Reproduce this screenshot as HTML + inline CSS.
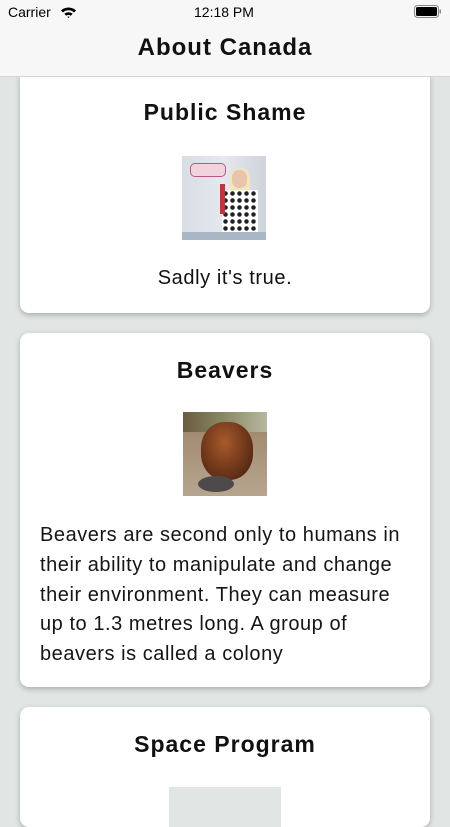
<!DOCTYPE html>
<html><head><meta charset="utf-8"><style>
*{margin:0;padding:0;box-sizing:border-box}
body{width:450px;height:800px;overflow:hidden;background:#e1e5e3;font-family:"Liberation Sans",sans-serif;color:#111;position:relative}
.nav{position:absolute;left:0;top:0;width:450px;height:77px;background:#f7f7f7;border-bottom:1px solid #d4d4d4;z-index:2}
.sb{position:absolute;top:4px;font-size:14px;color:#000}
.navt{position:absolute;top:34px;width:100%;text-align:center;font-size:24px;font-weight:bold;letter-spacing:1px}
.card{position:absolute;left:20px;width:410px;background:#fff;border-radius:9px;box-shadow:0 2px 6px rgba(0,0,0,0.25)}
.t{position:absolute;width:100%;text-align:center;font-size:23px;font-weight:bold;letter-spacing:1px}
.img{position:absolute;width:84px;height:84px;overflow:hidden}
.p{position:absolute;left:20px;font-size:20px;line-height:29.8px;white-space:nowrap;color:#151515;letter-spacing:0.55px}
</style></head><body>
<div class="nav">
<div class="sb" style="left:8px">Carrier</div>
<svg style="position:absolute;left:60px;top:6px" width="17" height="12" viewBox="0 0 17 12"><path d="M1 4.5 A11 11 0 0 1 16 4.5 L14 6.5 A8 8 0 0 0 3 6.5Z M4.3 7.8 A6.5 6.5 0 0 1 12.7 7.8 L10.8 9.7 A4 4 0 0 0 6.2 9.7Z M7.3 10.9 L8.5 12 L9.7 10.9 A2 2 0 0 0 7.3 10.9Z" fill="#000"/></svg>
<div class="sb" style="left:194px">12:18 PM</div>
<svg style="position:absolute;left:414px;top:5px" width="28" height="14" viewBox="0 0 28 14"><rect x="0.5" y="0.5" width="24" height="12" rx="3" fill="none" stroke="#888"/><rect x="2" y="2" width="21" height="9" rx="1.5" fill="#000"/><rect x="25.5" y="4.5" width="1.5" height="4" fill="#888"/></svg>
<div class="navt">About Canada</div>
</div>

<div class="card" style="top:70px;height:243px">
<div class="t" style="top:29px">Public Shame</div>
<div class="img" style="left:162px;top:86px;background:linear-gradient(90deg,#d9dde4 0%,#e6e8ee 50%,#cfd3db 100%)">
<div style="position:absolute;left:8px;top:7px;width:36px;height:14px;background:#f1d3de;border:1px solid #b75a7c;border-radius:5px"></div>
<div style="position:absolute;left:48px;top:12px;width:20px;height:28px;background:#f1e7b5;border-radius:10px 10px 4px 4px"></div>
<div style="position:absolute;left:50px;top:14px;width:15px;height:18px;background:#e9c4ad;border-radius:7px"></div>
<div style="position:absolute;left:40px;top:34px;width:36px;height:50px;background:radial-gradient(circle,#222 2px,#fff 2.5px) 0 0/7px 7px"></div>
<div style="position:absolute;left:38px;top:28px;width:5px;height:30px;background:#c9323b"></div>
<div style="position:absolute;left:0;top:76px;width:84px;height:8px;background:#a9b6c6"></div>
</div>
<div class="t" style="top:197px;font-weight:normal;font-size:20px;letter-spacing:0.6px">Sadly it's true.</div>
</div>

<div class="card" style="top:333px;height:354px">
<div class="t" style="top:24px">Beavers</div>
<div class="img" style="left:163px;top:79px;background:linear-gradient(180deg,#8b7a5e 0%,#a48e74 30%,#b7a58f 100%)">
<div style="position:absolute;left:0;top:0;width:84px;height:20px;background:linear-gradient(90deg,#6a5c3e,#8a8a68,#b8b8a0)"></div>
<div style="position:absolute;left:18px;top:10px;width:52px;height:58px;background:radial-gradient(ellipse at 45% 35%,#a85a2c,#5a2a14 75%);border-radius:45%"></div>
<div style="position:absolute;left:15px;top:64px;width:36px;height:16px;background:#4e4a4c;border-radius:50%"></div>
</div>
<div class="p" style="top:188px">Beavers are second only to humans in<br>their ability to manipulate and change<br>their environment. They can measure<br>up to 1.3 metres long. A group of<br>beavers is called a colony</div>
</div>

<div class="card" style="top:707px;height:120px">
<div class="t" style="top:24px">Space Program</div>
<div style="position:absolute;left:149px;top:80px;width:112px;height:40px;background:#e1e5e3"></div>
</div>
</body></html>
